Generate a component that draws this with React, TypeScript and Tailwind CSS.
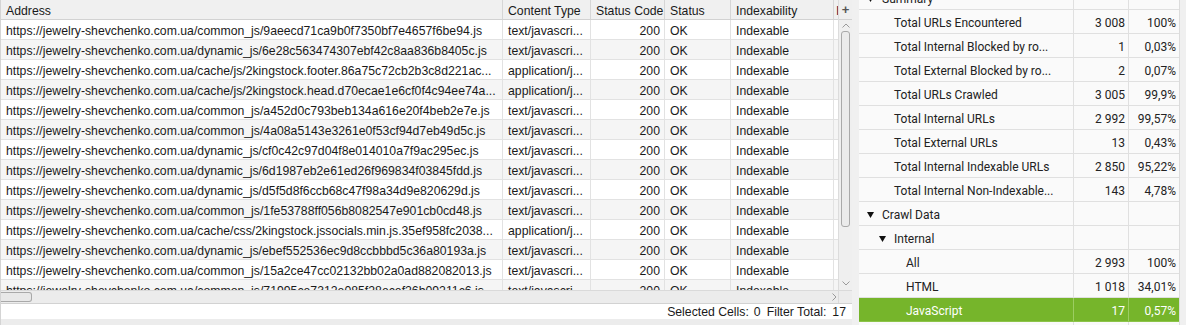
import React from 'react';

const host = 'https://jewelry-shevchenko.com.ua/';

const rows: [string, string][] = [
  ['common_js/9aeecd71ca9b0f7350bf7e4657f6be94.js', 'text/javascri...'],
  ['dynamic_js/6e28c563474307ebf42c8aa836b8405c.js', 'text/javascri...'],
  ['cache/js/2kingstock.footer.86a75c72cb2b3c8d221ac...', 'application/j...'],
  ['cache/js/2kingstock.head.d70ecae1e6cf0f4c94ee74a...', 'application/j...'],
  ['common_js/a452d0c793beb134a616e20f4beb2e7e.js', 'text/javascri...'],
  ['common_js/4a08a5143e3261e0f53cf94d7eb49d5c.js', 'text/javascri...'],
  ['dynamic_js/cf0c42c97d04f8e014010a7f9ac295ec.js', 'text/javascri...'],
  ['dynamic_js/6d1987eb2e61ed26f969834f03845fdd.js', 'text/javascri...'],
  ['dynamic_js/d5f5d8f6ccb68c47f98a34d9e820629d.js', 'text/javascri...'],
  ['common_js/1fe53788ff056b8082547e901cb0cd48.js', 'text/javascri...'],
  ['cache/css/2kingstock.jssocials.min.js.35ef958fc2038...', 'application/j...'],
  ['dynamic_js/ebef552536ec9d8ccbbbd5c36a80193a.js', 'text/javascri...'],
  ['common_js/15a2ce47cc02132bb02a0ad882082013.js', 'text/javascri...'],
  ['common_js/71995ce7312e085f28ecef26b09211c6.js', 'text/javascri...'],
];

interface SummaryRow {
  label: string;
  value?: string;
  pct?: string;
  level: number;
  toggle?: boolean;
  active?: boolean;
}

const summary: SummaryRow[] = [
  { label: 'Summary', level: 0, toggle: true },
  { label: 'Total URLs Encountered', value: '3 008', pct: '100%', level: 1 },
  { label: 'Total Internal Blocked by ro...', value: '1', pct: '0,03%', level: 1 },
  { label: 'Total External Blocked by ro...', value: '2', pct: '0,07%', level: 1 },
  { label: 'Total URLs Crawled', value: '3 005', pct: '99,9%', level: 1 },
  { label: 'Total Internal URLs', value: '2 992', pct: '99,57%', level: 1 },
  { label: 'Total External URLs', value: '13', pct: '0,43%', level: 1 },
  { label: 'Total Internal Indexable URLs', value: '2 850', pct: '95,22%', level: 1 },
  { label: 'Total Internal Non-Indexable...', value: '143', pct: '4,78%', level: 1 },
  { label: 'Crawl Data', level: 0, toggle: true },
  { label: 'Internal', level: 1, toggle: true },
  { label: 'All', value: '2 993', pct: '100%', level: 2 },
  { label: 'HTML', value: '1 018', pct: '34,01%', level: 2 },
  { label: 'JavaScript', value: '17', pct: '0,57%', level: 2, active: true },
  { label: 'CSS', value: '52', pct: '1,74%', level: 2 },
];

function Caret() {
  return (
    <svg width="7" height="6" viewBox="0 0 7 6" className="shrink-0">
      <polygon points="0,0 7,0 3.5,6" fill="#111" />
    </svg>
  );
}

export default function App() {
  const cell = 'h-full flex items-center pt-[3px] px-[5px] border-r border-[#e2e2e2] overflow-hidden whitespace-nowrap';
  const head = 'h-full flex items-center pt-[3px] px-[5px] border-r border-[#d6d6d6] overflow-hidden whitespace-nowrap';

  return (
    <div className="w-[1186px] h-[325px] flex bg-[#f0f0f0] overflow-hidden">
      {/* таблица адресов */}
      <div className="w-[852px] h-full flex flex-col border-l border-[#d4d4d4] font-['Liberation_Sans',Arial,sans-serif] text-[12.25px] text-[#1a1a1a]">
        <div className="h-[290px] flex bg-white">
          <div className="w-[838px] flex flex-col overflow-hidden">
            <div className="h-[20px] shrink-0 flex bg-[#f0f0f0] border-b border-[#d2d2d2]">
              <div className={`${head} w-[502px] shrink-0`}>Address</div>
              <div className={`${head} w-[88px] shrink-0`}>Content Type</div>
              <div className={`${head} w-[74px] shrink-0`}>Status Code</div>
              <div className={`${head} w-[66px] shrink-0`}>Status</div>
              <div className={`${head} w-[103px] shrink-0`}>Indexability</div>
              <div className="h-full flex items-center pt-[3px] pl-[2px] text-[#5a1a3a]">I</div>
            </div>
            {rows.map(([path, type], i) => (
              <div
                key={path}
                className={`h-[20px] shrink-0 flex border-b border-[#e2e2e2] ${i % 2 ? 'bg-[#f5f5f5]' : 'bg-white'}`}
              >
                <div className={`${cell} w-[502px] shrink-0`}>{host + path}</div>
                <div className={`${cell} w-[88px] shrink-0`}>{type}</div>
                <div className={`${cell} w-[74px] shrink-0 justify-end pr-[4px]`}>200</div>
                <div className={`${cell} w-[66px] shrink-0`}>OK</div>
                <div className={`${cell} w-[103px] shrink-0`}>Indexable</div>
                <div className="h-full flex-1" />
              </div>
            ))}
          </div>
          {/* вертикальный скролл */}
          <div className="w-[14px] flex flex-col bg-[#efefef] border-l border-[#dcdcdc]">
            <div className="h-[20px] flex items-center justify-center border-b border-[#d2d2d2] text-[#555] font-bold text-[13px] leading-none">
              +
            </div>
            <div className="flex-1 flex flex-col items-center pt-[1px] pb-[1px]">
              <svg width="8" height="5" viewBox="0 0 8 5" className="mt-[2px]">
                <polyline points="0.5,4.5 4,1 7.5,4.5" fill="none" stroke="#9a9a9a" strokeWidth="1" />
              </svg>
              <div className="mt-[3px] w-[9px] h-[196px] rounded-[3px] border border-[#a9a9a9] bg-[#ebebeb]" />
              <div className="flex-1" />
              <svg width="8" height="5" viewBox="0 0 8 5" className="mb-[3px]">
                <polyline points="0.5,0.5 4,4 7.5,0.5" fill="none" stroke="#9a9a9a" strokeWidth="1" />
              </svg>
            </div>
          </div>
        </div>
        {/* горизонтальный скролл */}
        <div className="h-[13px] flex bg-[#ececec] border-t border-[#dadada]">
          <div className="w-[838px] flex items-center">
            <div className="w-[31px] h-[10px] rounded-r-[3px] border border-l-0 border-[#a9a9a9] bg-[#e8e8e8]" />
            <div className="flex-1" />
            <svg width="5" height="8" viewBox="0 0 5 8" className="mr-[1px]">
              <polyline points="0.5,0.5 4,4 0.5,7.5" fill="none" stroke="#9a9a9a" strokeWidth="1" />
            </svg>
          </div>
          <div className="w-[14px] border-l border-[#dadada]" />
        </div>
        <div className="h-[16px] bg-white flex items-center pt-[1px] justify-end pr-[6px] text-[12.25px] border-t border-[#d2d2d2]">
          <span>Selected Cells:</span>
          <span className="ml-[5px]">0</span>
          <span className="ml-[6px]">Filter Total:</span>
          <span className="ml-[6px]">17</span>
        </div>
        <div className="flex-1 bg-[#ececec]" />
      </div>

      <div className="w-[7px] shrink-0" />

      {/* обзор */}
      <div className="flex-1 flex overflow-hidden bg-[#fafafa] font-['Roboto',sans-serif] text-[12px] text-[#222]">
        <div className="w-[321px] flex flex-col mt-[-14px] border-r border-[#dcdcdc]">
          {summary.map((r) => (
            <div
              key={r.label}
              className={`h-[24px] shrink-0 flex border-b ${
                r.active ? 'bg-[#76b52b] text-white border-[#8cc44a]' : 'border-[#e0e0e0]'
              }`}
            >
              <div
                className={`w-[215px] h-full flex items-center pt-[2px] border-r ${r.active ? 'border-[#9ccd62]' : 'border-[#e0e0e0]'} ${
                  r.level === 0 ? 'pl-[8px]' : r.level === 1 ? (r.toggle ? 'pl-[20px]' : 'pl-[35px]') : 'pl-[47px]'
                }`}
              >
                {r.toggle && (
                  <span className="mr-[8px] flex">
                    <Caret />
                  </span>
                )}
                <span className="whitespace-nowrap">{r.label}</span>
              </div>
              <div
                className={`w-[55px] h-full flex items-center pt-[2px] justify-end pr-[3px] border-r ${
                  r.active ? 'border-[#9ccd62]' : 'border-[#e0e0e0]'
                }`}
              >
                {r.value}
              </div>
              <div className="flex-1 h-full flex items-center pt-[2px] justify-end pr-[3px]">{r.pct}</div>
            </div>
          ))}
        </div>
        <div className="flex-1 bg-[#f0f0f0]" />
      </div>
    </div>
  );
}
